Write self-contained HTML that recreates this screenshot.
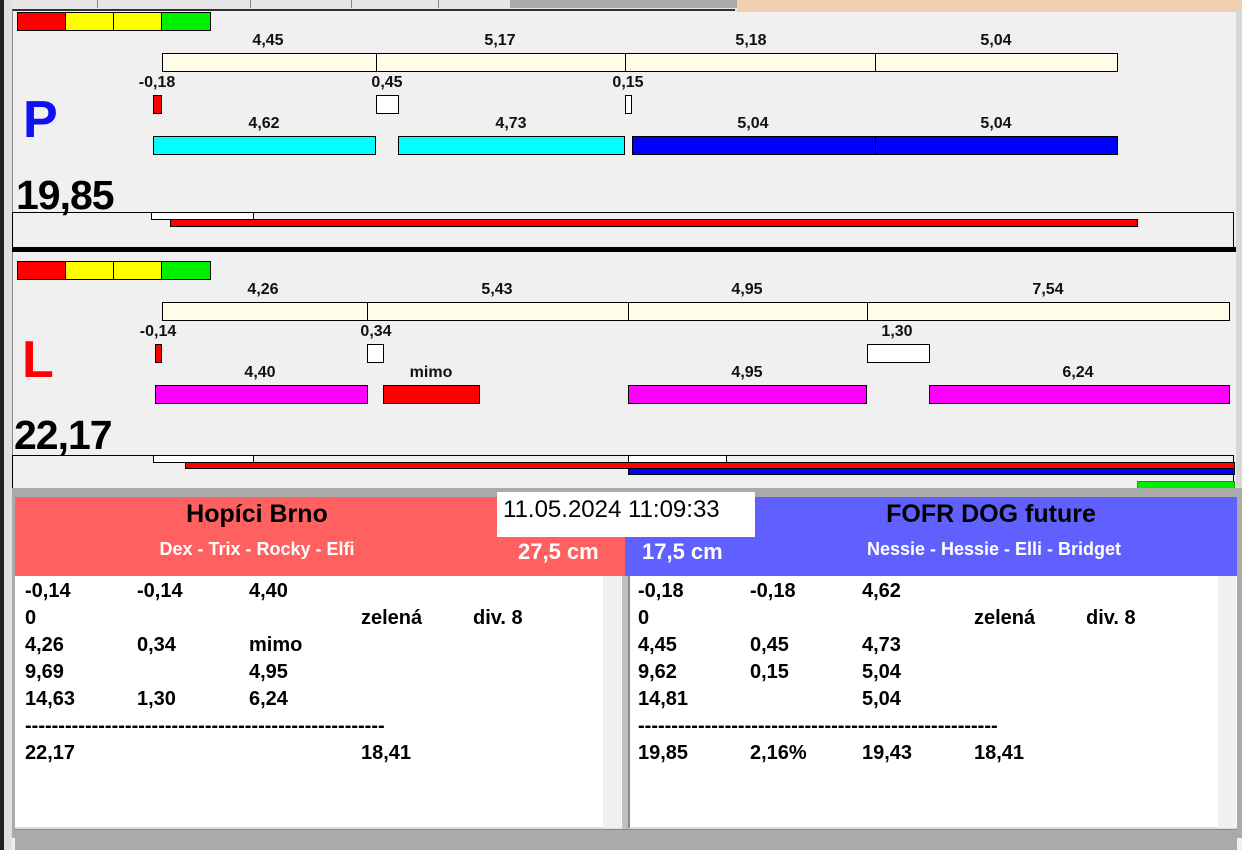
<!DOCTYPE html>
<html><head><meta charset="utf-8"><style>
*{margin:0;padding:0;box-sizing:border-box}
body{width:1242px;height:850px;position:relative;overflow:hidden;background:#f0f0f0;font-family:"Liberation Sans",Arial,sans-serif}
.a{position:absolute}
.b{position:absolute;border:1px solid #000}
.l{position:absolute;font-weight:bold;font-size:16px;color:#111;transform:translateX(-50%);white-space:nowrap;line-height:18px}
.t{position:absolute;font-weight:bold;font-size:20px;color:#000;white-space:nowrap;line-height:27px}
</style></head><body>
<!-- top strip -->
<div class="a" style="left:0;top:0;width:737px;height:10px;background:#e6e6e6"></div>
<div class="a" style="left:97px;top:0;width:1px;height:8px;background:#888"></div>
<div class="a" style="left:250px;top:0;width:1px;height:8px;background:#888"></div>
<div class="a" style="left:351px;top:0;width:1px;height:8px;background:#888"></div>
<div class="a" style="left:438px;top:0;width:1px;height:8px;background:#888"></div>
<div class="a" style="left:510px;top:0;width:227px;height:8px;background:#aaa"></div>
<div class="a" style="left:737px;top:0;width:505px;height:12px;background:#f0d0b0"></div>
<div class="a" style="left:0;top:9px;width:735px;height:2px;background:#333"></div>
<!-- left dark border -->
<div class="a" style="left:0;top:0;width:4px;height:850px;background:#222"></div>
<div class="a" style="left:4px;top:0;width:8px;height:850px;background:#e0e0e0"></div>
<div class="a" style="left:12px;top:10px;width:1px;height:480px;background:#888"></div>
<div class="a" style="left:1236px;top:10px;width:6px;height:480px;background:#d8d8d8"></div>

<!-- P panel -->
<div class="b" style="left:17px;top:12px;width:49px;height:19px;background:#f00"></div>
<div class="b" style="left:65px;top:12px;width:49px;height:19px;background:#ff0"></div>
<div class="b" style="left:113px;top:12px;width:49px;height:19px;background:#ff0"></div>
<div class="b" style="left:161px;top:12px;width:50px;height:19px;background:#0e0"></div>

<div class="l" style="left:268px;top:32px">4,45</div>
<div class="l" style="left:500px;top:32px">5,17</div>
<div class="l" style="left:751px;top:32px">5,18</div>
<div class="l" style="left:996px;top:32px">5,04</div>
<div class="b" style="left:162px;top:53px;width:215px;height:19px;background:#fffde8"></div>
<div class="b" style="left:376px;top:53px;width:250px;height:19px;background:#fffde8"></div>
<div class="b" style="left:625px;top:53px;width:251px;height:19px;background:#fffde8"></div>
<div class="b" style="left:875px;top:53px;width:243px;height:19px;background:#fffde8"></div>

<div class="l" style="left:157px;top:74px">-0,18</div>
<div class="l" style="left:387px;top:74px">0,45</div>
<div class="l" style="left:628px;top:74px">0,15</div>
<div class="b" style="left:153px;top:95px;width:9px;height:19px;background:#f00"></div>
<div class="b" style="left:376px;top:95px;width:23px;height:19px;background:#fff"></div>
<div class="b" style="left:625px;top:95px;width:7px;height:19px;background:#fff"></div>

<div class="a" style="left:23px;top:90px;font-size:52px;font-weight:bold;color:#1010f0;line-height:60px">P</div>

<div class="l" style="left:264px;top:115px">4,62</div>
<div class="l" style="left:511px;top:115px">4,73</div>
<div class="l" style="left:753px;top:115px">5,04</div>
<div class="l" style="left:996px;top:115px">5,04</div>
<div class="b" style="left:153px;top:136px;width:223px;height:19px;background:#0ff"></div>
<div class="b" style="left:398px;top:136px;width:227px;height:19px;background:#0ff"></div>
<div class="b" style="left:632px;top:136px;width:244px;height:19px;background:#00f"></div>
<div class="b" style="left:875px;top:136px;width:243px;height:19px;background:#00f"></div>

<div class="a" style="left:16px;top:173px;font-size:41px;font-weight:bold;color:#000;line-height:44px;letter-spacing:-1px">19,85</div>
<div class="b" style="left:12px;top:212px;width:1222px;height:36px;border-bottom:none"></div>
<div class="b" style="left:151px;top:212px;width:103px;height:8px;background:#fff"></div>
<div class="b" style="left:170px;top:219px;width:968px;height:8px;background:#f00"></div>
<div class="a" style="left:12px;top:247px;width:1224px;height:5px;background:#000"></div>

<!-- L panel -->
<div class="b" style="left:17px;top:261px;width:49px;height:19px;background:#f00"></div>
<div class="b" style="left:65px;top:261px;width:49px;height:19px;background:#ff0"></div>
<div class="b" style="left:113px;top:261px;width:49px;height:19px;background:#ff0"></div>
<div class="b" style="left:161px;top:261px;width:50px;height:19px;background:#0e0"></div>

<div class="l" style="left:263px;top:281px">4,26</div>
<div class="l" style="left:497px;top:281px">5,43</div>
<div class="l" style="left:747px;top:281px">4,95</div>
<div class="l" style="left:1048px;top:281px">7,54</div>
<div class="b" style="left:162px;top:302px;width:206px;height:19px;background:#fffde8"></div>
<div class="b" style="left:367px;top:302px;width:262px;height:19px;background:#fffde8"></div>
<div class="b" style="left:628px;top:302px;width:240px;height:19px;background:#fffde8"></div>
<div class="b" style="left:867px;top:302px;width:363px;height:19px;background:#fffde8"></div>

<div class="l" style="left:158px;top:323px">-0,14</div>
<div class="l" style="left:376px;top:323px">0,34</div>
<div class="l" style="left:897px;top:323px">1,30</div>
<div class="b" style="left:155px;top:344px;width:7px;height:19px;background:#f00"></div>
<div class="b" style="left:367px;top:344px;width:17px;height:19px;background:#fff"></div>
<div class="b" style="left:867px;top:344px;width:63px;height:19px;background:#fff"></div>

<div class="a" style="left:22px;top:330px;font-size:52px;font-weight:bold;color:#f00;line-height:60px">L</div>

<div class="l" style="left:260px;top:364px">4,40</div>
<div class="l" style="left:431px;top:364px">mimo</div>
<div class="l" style="left:747px;top:364px">4,95</div>
<div class="l" style="left:1078px;top:364px">6,24</div>
<div class="b" style="left:155px;top:385px;width:213px;height:19px;background:#f0f"></div>
<div class="b" style="left:383px;top:385px;width:97px;height:19px;background:#f00"></div>
<div class="b" style="left:628px;top:385px;width:239px;height:19px;background:#f0f"></div>
<div class="b" style="left:929px;top:385px;width:301px;height:19px;background:#f0f"></div>

<div class="a" style="left:14px;top:413px;font-size:41px;font-weight:bold;color:#000;line-height:44px;letter-spacing:-1px">22,17</div>
<div class="b" style="left:12px;top:455px;width:1222px;height:34px;border-bottom:none"></div>
<div class="b" style="left:153px;top:455px;width:101px;height:8px;background:#fff"></div>
<div class="b" style="left:628px;top:455px;width:99px;height:8px;background:#fff"></div>
<div class="b" style="left:185px;top:462px;width:1050px;height:7px;background:#f00"></div>
<div class="b" style="left:628px;top:468px;width:607px;height:7px;background:#00f"></div>
<div class="b" style="left:1137px;top:481px;width:98px;height:8px;background:#0e0;border-color:#0a0"></div>

<!-- separator -->
<div class="a" style="left:12px;top:488px;width:1230px;height:9px;background:#aaa"></div>
<div class="a" style="left:12px;top:497px;width:3px;height:341px;background:#aaa"></div>
<div class="a" style="left:1237px;top:497px;width:5px;height:341px;background:#aaa"></div>

<!-- headers -->
<div class="a" style="left:15px;top:497px;width:610px;height:79px;background:#ff6060"></div>
<div class="a" style="left:625px;top:497px;width:612px;height:79px;background:#6060ff"></div>
<div class="a" style="left:497px;top:492px;width:258px;height:45px;background:#fff"></div>
<div class="a" style="left:503px;top:494px;font-size:24px;color:#000;line-height:32px">11.05.2024 11:09:33</div>
<div class="a" style="left:257px;top:498px;transform:translateX(-50%);font-size:25px;font-weight:bold;line-height:32px;white-space:nowrap">Hopíci Brno</div>
<div class="a" style="left:257px;top:538px;transform:translateX(-50%);font-size:18px;font-weight:bold;color:#fff;line-height:22px;white-space:nowrap">Dex - Trix - Rocky - Elfi</div>
<div class="a" style="left:518px;top:538px;font-size:22px;font-weight:bold;color:#fff;line-height:28px">27,5 cm</div>
<div class="a" style="left:642px;top:538px;font-size:22px;font-weight:bold;color:#fff;line-height:28px">17,5 cm</div>
<div class="a" style="left:991px;top:498px;transform:translateX(-50%);font-size:25px;font-weight:bold;line-height:32px;white-space:nowrap">FOFR DOG future</div>
<div class="a" style="left:994px;top:538px;transform:translateX(-50%);font-size:18px;font-weight:bold;color:#fff;line-height:22px;white-space:nowrap">Nessie - Hessie - Elli - Bridget</div>

<!-- text areas -->
<div class="a" style="left:15px;top:576px;width:607px;height:253px;background:#fff;border-bottom:2px solid #ddd"></div>
<div class="a" style="left:603px;top:576px;width:18px;height:252px;background:#f0f0f0"></div>
<div class="a" style="left:622px;top:576px;width:6px;height:262px;background:#c0c0c0"></div>
<div class="a" style="left:628px;top:576px;width:609px;height:253px;background:#fff;border-bottom:2px solid #ddd;border-left:2px solid #888"></div>
<div class="a" style="left:1218px;top:576px;width:18px;height:252px;background:#f0f0f0"></div>
<div class="a" style="left:15px;top:829px;width:1222px;height:21px;background:#aaa;border-top:1px solid #888"></div>

<div class="t" style="left:25px;top:578px">-0,14</div><div class="t" style="left:137px;top:578px">-0,14</div><div class="t" style="left:249px;top:578px">4,40</div>
<div class="t" style="left:25px;top:605px">0</div><div class="t" style="left:361px;top:605px">zelená</div><div class="t" style="left:473px;top:605px">div. 8</div>
<div class="t" style="left:25px;top:632px">4,26</div><div class="t" style="left:137px;top:632px">0,34</div><div class="t" style="left:249px;top:632px">mimo</div>
<div class="t" style="left:25px;top:659px">9,69</div><div class="t" style="left:249px;top:659px">4,95</div>
<div class="t" style="left:25px;top:686px">14,63</div><div class="t" style="left:137px;top:686px">1,30</div><div class="t" style="left:249px;top:686px">6,24</div>
<div class="t" style="left:25px;top:713px">------------------------------------------------------</div>
<div class="t" style="left:25px;top:740px">22,17</div><div class="t" style="left:361px;top:740px">18,41</div>

<div class="t" style="left:638px;top:578px">-0,18</div><div class="t" style="left:750px;top:578px">-0,18</div><div class="t" style="left:862px;top:578px">4,62</div>
<div class="t" style="left:638px;top:605px">0</div><div class="t" style="left:974px;top:605px">zelená</div><div class="t" style="left:1086px;top:605px">div. 8</div>
<div class="t" style="left:638px;top:632px">4,45</div><div class="t" style="left:750px;top:632px">0,45</div><div class="t" style="left:862px;top:632px">4,73</div>
<div class="t" style="left:638px;top:659px">9,62</div><div class="t" style="left:750px;top:659px">0,15</div><div class="t" style="left:862px;top:659px">5,04</div>
<div class="t" style="left:638px;top:686px">14,81</div><div class="t" style="left:862px;top:686px">5,04</div>
<div class="t" style="left:638px;top:713px">------------------------------------------------------</div>
<div class="t" style="left:638px;top:740px">19,85</div><div class="t" style="left:750px;top:740px">2,16%</div><div class="t" style="left:862px;top:740px">19,43</div><div class="t" style="left:974px;top:740px">18,41</div>
</body></html>
